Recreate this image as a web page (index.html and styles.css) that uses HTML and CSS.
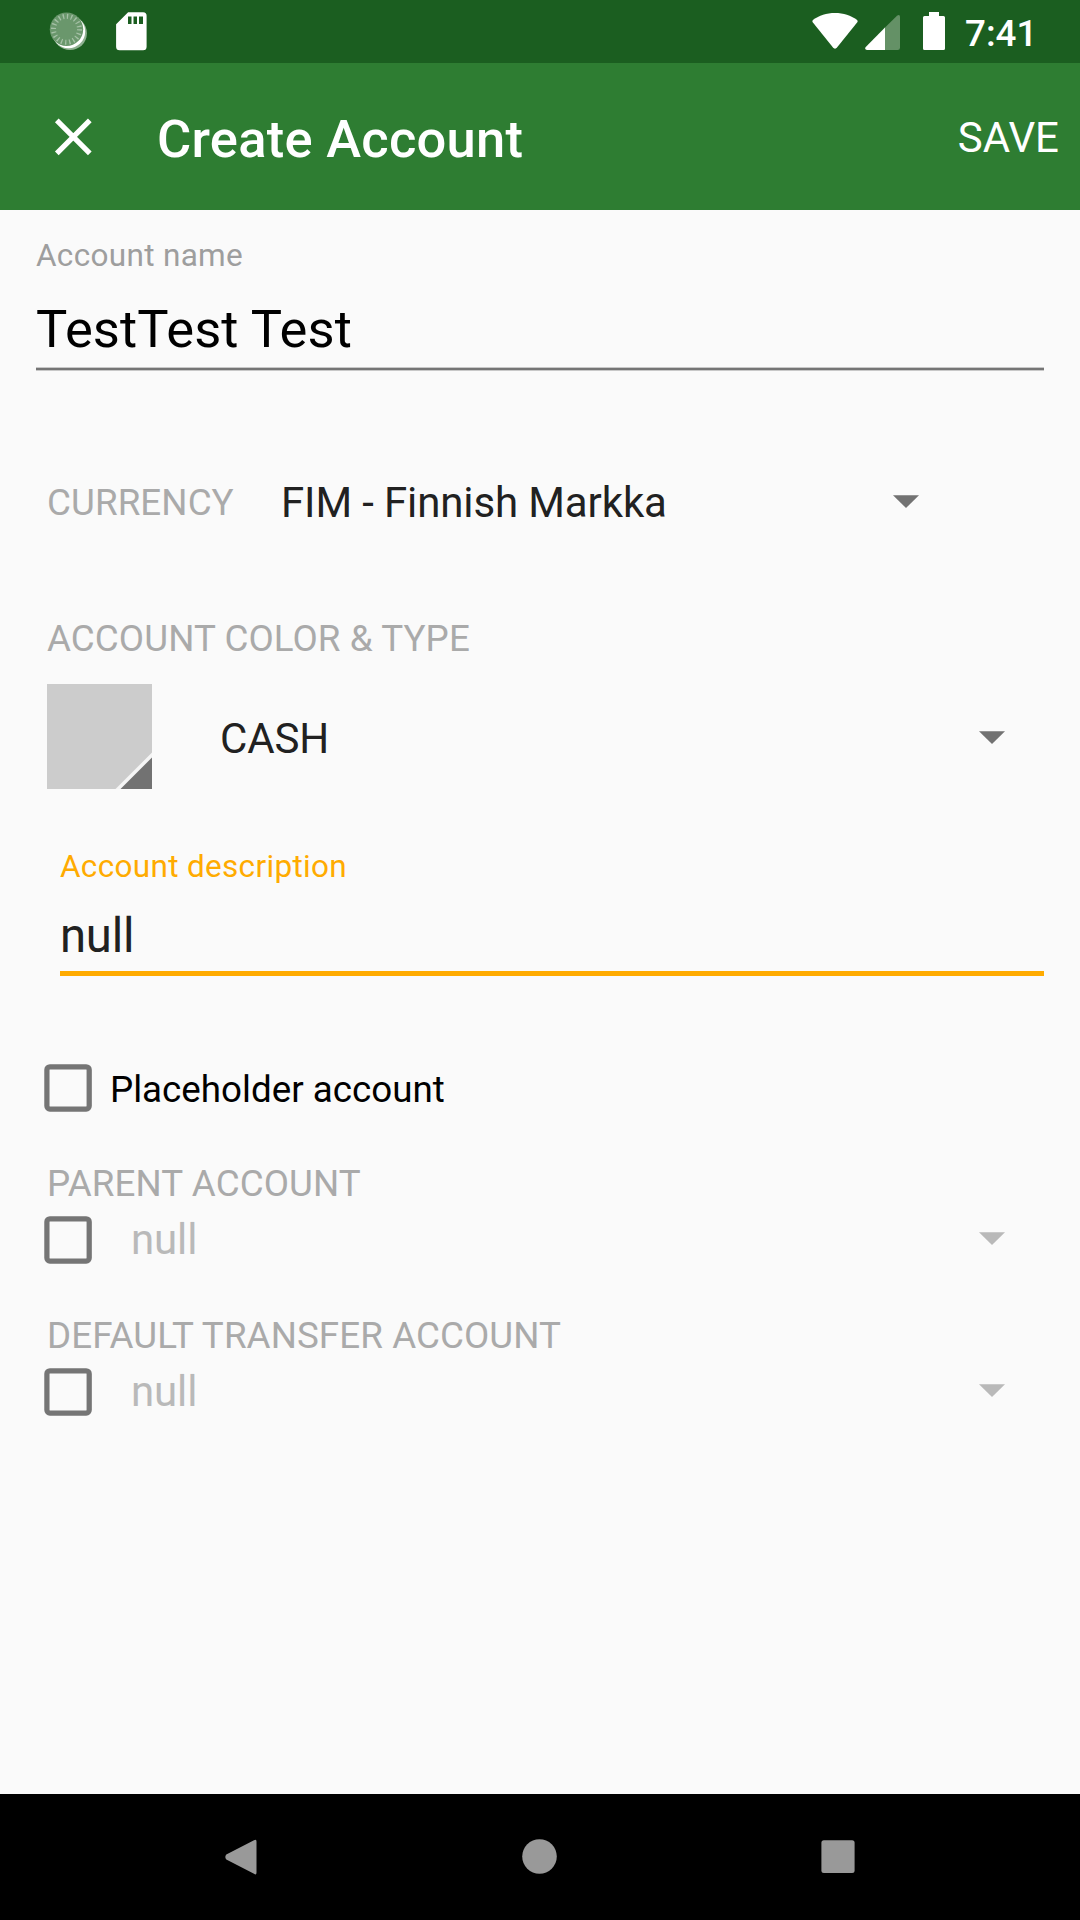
FILE: index.html
```html
<!DOCTYPE html>
<html lang="en">
<head>
<meta charset="utf-8">
<title>Create Account</title>
<link rel="stylesheet" href="styles.css">
</head>
<body>
<div class="screen">
  <header class="status">
    <svg class="sync" width="40" height="40" viewBox="0 0 40 40">
      <circle cx="21" cy="21.200" r="16.900" fill="#8fb191"/>
      <circle cx="19.500" cy="19.500" r="16.700" fill="#fff"/>
      <circle cx="17.500" cy="17.300" r="16.700" fill="#6a976c"/>
      <circle cx="17.500" cy="17.300" r="13" fill="none" stroke="#a5c1a6" stroke-width="5" stroke-dasharray="1.300 2.784"/>
    </svg>
    <svg class="sd" width="32" height="40" viewBox="0 0 32 40">
      <path fill="#fff" fill-rule="evenodd" d="M12.100.300H27.100a3.500 3.500 0 0 1 3.500 3.500V34.800a3.500 3.500 0 0 1-3.500 3.500H3.600A3.500 3.500 0 0 1 .100 34.800V12.300ZM12 4.500V12h3.500V4.500ZM17.500 4.500V12H21V4.500ZM23 4.500V12h4V4.500Z"/>
    </svg>
    <svg class="wifi" width="46" height="38" viewBox="0 0 46 38">
      <path fill="#fff" d="M23 1C14.500 1 7 3.500 1.200 7.700Q-.300 9 .900 10.500L20.800 35.300Q23 38 25.200 35.300L45.100 10.500Q46.300 9 44.800 7.700C39 3.500 31.500 1 23 1Z"/>
    </svg>
    <svg class="signal" width="36" height="38" viewBox="0 0 36 38">
      <path fill="#649166" d="M19.500 15 32 2.700Q35 1 35 4V34.700Q35 37 32.700 37H19.500Z"/>
      <path fill="#fff" d="M20 14.500V37H2Q-.500 36.700.500 34.200Z"/>
    </svg>
    <svg class="battery" width="22" height="38" viewBox="0 0 22 38">
      <path fill="#fff" d="M6 0H16V4H20.500Q22 4 22 5.500V36.500Q22 38 20.500 38H1.500Q0 38 0 36.500V5.500Q0 4 1.500 4H6Z"/>
    </svg>
    <span class="clock">7:41</span>
  </header>

  <div class="toolbar">
    <svg class="close" width="38" height="38" viewBox="0 0 38 38">
      <path d="M2.800 2.300 35.800 35.300M35.800 2.300 2.800 35.300" stroke="#fff" stroke-width="5.200"/>
    </svg>
    <h1 class="title">Create Account</h1>
    <span class="save">SAVE</span>
  </div>

  <main class="form">
    <div class="field">
      <div class="hint">Account name</div>
      <div class="value name">TestTest Test</div>
      <div class="underline"></div>
    </div>

    <div class="row currency">
      <span class="label">CURRENCY</span>
      <span class="choice">FIM - Finnish Markka</span>
      <svg class="caret" width="26" height="13" viewBox="0 0 26 13"><path d="M0 .300H26L13 13Z"/></svg>
    </div>

    <div class="label section-type">ACCOUNT COLOR &amp; TYPE</div>
    <div class="row type">
      <svg class="swatch" width="105" height="105" viewBox="0 0 105 105">
        <rect width="105" height="105" fill="#ccc"/>
        <path fill="#f5f5f5" d="M105 68.500V105H68.500Z"/>
        <path fill="#727272" d="M105 73.500V105H73.500Z"/>
      </svg>
      <span class="choice">CASH</span>
      <svg class="caret" width="26" height="13" viewBox="0 0 26 13"><path d="M0 .300H26L13 13Z"/></svg>
    </div>

    <div class="field description">
      <div class="hint">Account description</div>
      <div class="value">null</div>
      <div class="underline"></div>
    </div>

    <div class="row placeholder">
      <svg class="check" width="48" height="48" viewBox="0 0 48 48"><rect x="2.900" y="2.800" width="42.300" height="42.300" rx="3"/></svg>
      <span class="check-text">Placeholder account</span>
    </div>

    <div class="label">PARENT ACCOUNT</div>
    <div class="row account">
      <svg class="check" width="48" height="48" viewBox="0 0 48 48"><rect x="2.900" y="2.800" width="42.300" height="42.300" rx="3"/></svg>
      <span class="choice">null</span>
      <svg class="caret" width="26" height="13" viewBox="0 0 26 13"><path d="M0 .300H26L13 13Z"/></svg>
    </div>

    <div class="label">DEFAULT TRANSFER ACCOUNT</div>
    <div class="row account">
      <svg class="check" width="48" height="48" viewBox="0 0 48 48"><rect x="2.900" y="2.800" width="42.300" height="42.300" rx="3"/></svg>
      <span class="choice">null</span>
      <svg class="caret" width="26" height="13" viewBox="0 0 26 13"><path d="M0 .300H26L13 13Z"/></svg>
    </div>
  </main>

  <nav class="navbar">
    <svg width="36" height="36" viewBox="0 0 36 36"><path d="M31 1.300Q33.500-.500 33.500 2.500V33.500Q33.500 36.500 31 34.700L3.300 20.500Q1.300 18 3.300 15.500Z"/></svg>
    <svg width="36" height="36" viewBox="0 0 36 36"><circle cx="17.500" cy="17.500" r="17.300"/></svg>
    <svg width="36" height="36" viewBox="0 0 36 36"><rect x="1.400" y="1.200" width="33.200" height="32.800" rx="2.500"/></svg>
  </nav>
</div>
</body>
</html>
```

FILE: styles.css
```css
* { box-sizing: border-box; }

body {
  margin: 0;
  font-family: Roboto, "Noto Sans", sans-serif;
  background: #fafafa;
}

svg { display: block; flex: none; }

.screen {
  display: flex;
  flex-direction: column;
  width: 1080px;
  height: 1920px;
  white-space: nowrap;
  overflow: hidden;
}

/* Status bar */
.status {
  display: flex;
  align-items: flex-start;
  height: 63px;
  padding: 12px 0 0 49px;
  background: #1b5e20;
}
.sd { margin-left: 27px; }
.wifi { margin: 0 0 0 664px; }
.signal { margin: 1px 0 0 7px; }
.battery { margin-left: 22px; }
.clock {
  margin: 2px 0 0 20px;
  color: #fff;
  font-size: 36.75px;
  font-weight: 500;
  line-height: 40px;
}

/* Toolbar */
.toolbar {
  display: flex;
  align-items: center;
  height: 147px;
  padding: 0 21px 0 54px;
  background: #2e7d32;
  color: #fff;
}
.title {
  margin: 5px 0 0 65px;
  font-size: 52.5px;
  font-weight: 500;
  line-height: 60px;
  letter-spacing: 0.25px;
}
.save {
  margin: 2px 0 0 auto;
  font-size: 42px;
  line-height: 50px;
}

/* Form */
.form {
  flex: 1;
  padding-top: 26px;
  color: #212121;
}
.field { margin: 0 36px; }
.hint {
  color: #9e9e9e;
  font-size: 31.5px;
  line-height: 40px;
  letter-spacing: 0.32px;
}
.value {
  margin-top: 28px;
  font-size: 47.25px;
  line-height: 50px;
  letter-spacing: -0.25px;
}
.name {
  color: #000;
  font-size: 52.5px;
  letter-spacing: 0.1px;
}
.underline {
  height: 4px;
  margin-top: 13px;
  background: #757575;
  border: solid #c8c8c8;
  border-width: 1px 0;
}

.row {
  display: flex;
  align-items: center;
}
.label {
  margin-left: 47px;
  color: #aaa;
  font-size: 36.75px;
  line-height: 40px;
  letter-spacing: 0.08px;
}
.choice {
  font-size: 42px;
  line-height: 50px;
  letter-spacing: -0.12px;
}
.caret {
  margin-left: auto;
  fill: #727272;
}
.check {
  fill: none;
  stroke: #757575;
  stroke-width: 5.25px;
}

.currency {
  height: 50px;
  margin-top: 107px;
  padding-right: 161.5px;
}
.currency .label { width: 234px; }
.currency .caret { margin-top: -3px; }

.section-type { margin-top: 91px; }

.type {
  height: 105px;
  margin-top: 25px;
  padding: 0 75.5px 0 47px;
}
.type .choice { margin: 4px 0 0 68px; }
.type .caret { margin-top: 2px; }

.description { margin: 58px 36px 0 60px; }
.description .hint { color: #ffab00; }
.description .value { margin-top: 24px; }
.description .underline {
  height: 5px;
  margin-top: 10px;
  background: #ffab00;
  border: 0;
}

.placeholder {
  margin: 88px 0 52px;
  padding-left: 44px;
}
.check-text {
  margin: 3px 0 0 18px;
  color: #000;
  font-size: 36.75px;
  line-height: 40px;
}

.account {
  height: 50px;
  margin: 11px 0 51px;
  padding: 0 75.5px 0 44px;
}
.account .choice {
  margin-left: 39px;
  color: #b9b9b9;
}
.account .caret {
  margin-top: -3px;
  fill: #b9b9b9;
}

/* System navigation */
.navbar {
  display: flex;
  justify-content: space-between;
  height: 126px;
  padding: 45px 224px 0 223px;
  background: #000;
  fill: #999;
}
```
